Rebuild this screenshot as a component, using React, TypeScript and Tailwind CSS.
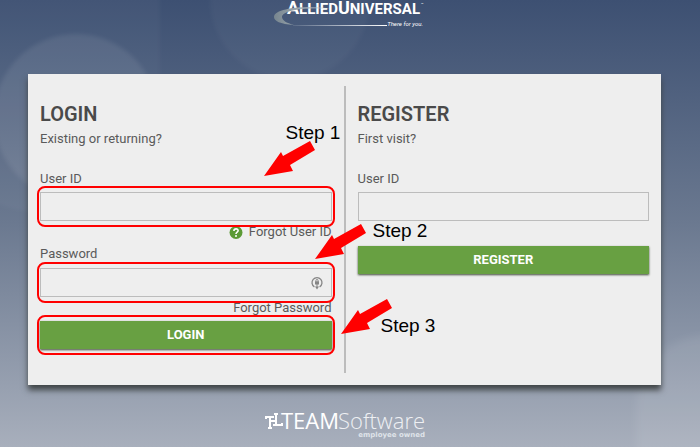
import React, { useState } from "react";

interface StepProps {
  label: string;
  className: string;
  labelClassName: string;
}

const inputClass =
  "block h-[29px] w-full border border-[#bcbcbc] bg-[#eeeeee] px-2 text-[13px] text-[#4a4a4a] outline-none";

const buttonClass =
  "block h-7 w-full cursor-pointer bg-[#68a042] text-[13px] font-bold text-white shadow-[0_1px_2px_#3f4a38]";

const AlliedLogo: React.FC = () => (
  <svg
    className="h-[30px] w-[154px] overflow-visible"
    viewBox="0 0 154 30"
    role="img"
    aria-label="Allied Universal"
  >
    <defs>
      <linearGradient id="swoosh" x1="0" x2="1">
        <stop offset="0" stopColor="#77858f" />
        <stop offset="0.4" stopColor="#9aa6ad" />
        <stop offset="1" stopColor="#c5ccd2" stopOpacity="0.2" />
      </linearGradient>
      <linearGradient id="rule" x1="0" x2="1">
        <stop offset="0" stopColor="#ffffff" stopOpacity="0.1" />
        <stop offset="1" stopColor="#ffffff" />
      </linearGradient>
    </defs>
    <text
      x="12"
      y="14"
      fontSize="15"
      fontWeight="700"
      fill="#fff"
      fontFamily="Roboto, sans-serif"
    >
      <tspan fontSize="18">A</tspan>LLIED<tspan fontSize="18">U</tspan>NIVERSAL
    </text>
    <text x="146" y="6" fontSize="4" fill="#fff" fontFamily="Roboto, sans-serif">
      ™
    </text>
    <path
      d="M56 9C40 5 -1 7 -1 17c0 4 6 7 20 8C11 23 7 20 7 17 7 10 30 7 56 9Z"
      fill="url(#swoosh)"
    />
    <rect x="18" y="25" width="94" height="1" fill="url(#rule)" />
    <text
      x="148"
      y="26"
      fontSize="6"
      fontStyle="italic"
      textAnchor="end"
      fill="#fff"
      fontFamily="Roboto, sans-serif"
    >
      There for you.
    </text>
  </svg>
);

const TeamLogo: React.FC = () => (
  <svg
    className="h-8 w-[164px] overflow-visible"
    viewBox="0 0 164 32"
    role="img"
    aria-label="TEAM Software, employee owned"
  >
    <path
      d="M3 10V8H11M7 8V20M5 19H9M8 12H12M13 4V16M11 5H15M10 16H19V14"
      stroke="#fff"
      strokeWidth="2"
      fill="none"
    />
    <text x="18" y="20" fontSize="22" fill="#fff" fontFamily="Open Sans, sans-serif">
      TEAM
    </text>
    <text
      x="75"
      y="20"
      fontSize="22"
      fontWeight="300"
      fill="#eef0f3"
      fontFamily="Open Sans, sans-serif"
    >
      Software
    </text>
    <text
      x="162"
      y="28"
      fontSize="7"
      fontWeight="700"
      textAnchor="end"
      fill="#dfe3e9"
      fontFamily="DejaVu Sans, sans-serif"
    >
      employee owned
    </text>
  </svg>
);

const Step: React.FC<StepProps> = ({ label, className, labelClassName }) => (
  <div className={`pointer-events-none absolute z-10 ${className}`}>
    <svg className="h-9 w-[52px]" viewBox="0 0 52 36" aria-hidden="true">
      <path d="M0 35L17 11L19 15L46 0L51 9L26 24L29 30Z" fill="#ff0000" />
    </svg>
    <span
      className={`absolute whitespace-nowrap font-['Liberation_Sans',sans-serif] text-[19px] leading-5 text-black ${labelClassName}`}
    >
      {label}
    </span>
  </div>
);

// Red frame drawn around the control that a step points at
const Highlight: React.FC<{ children: React.ReactNode }> = ({ children }) => (
  <div className="relative">
    {children}
    <div className="pointer-events-none absolute -inset-x-[3px] -inset-y-[6px] rounded-lg border-2 border-[#ff0000]" />
  </div>
);

// Large soft discs behind the card
const Backdrop: React.FC = () => (
  <div className="absolute inset-0 -z-10 overflow-hidden">
    <div className="absolute -top-32 -left-20 h-[340px] w-60 rounded-full bg-white/3 blur-[2px]" />
    <div className="absolute top-[34px] -left-[6px] h-[166px] w-[164px] rounded-full bg-white/8 blur-[2px]" />
    <div className="absolute -top-20 left-[210px] h-40 w-40 rounded-full bg-white/3 blur-[2px]" />
    <div className="absolute -right-20 -bottom-16 h-44 w-36 rounded-full bg-white/8 blur-[4px]" />
  </div>
);

const App: React.FC = () => {
  const [userId, setUserId] = useState("");
  const [password, setPassword] = useState("");
  const [newUserId, setNewUserId] = useState("");

  return (
    <div className="relative isolate min-h-screen overflow-hidden bg-linear-to-b from-[#3d5072] via-[#6b7990] to-[#a8afbc] font-[Roboto,sans-serif] text-[13px] leading-5 text-[#5a5a5a]">
      <Backdrop />

      <header className="flex justify-center pl-1">
        <AlliedLogo />
      </header>

      <main className="mt-11 mr-[39px] ml-7 grid grid-cols-[1fr_2px_1fr] gap-3 bg-[#eeeeee] p-3 shadow-[0_5px_6px_#3f4446]">
        <form className="pt-[14px] pb-6" onSubmit={(e) => e.preventDefault()}>
          <h1 className="text-xl leading-7 font-semibold text-[#4a4a4a]">LOGIN</h1>
          <p className="mt-px">Existing or returning?</p>

          <label htmlFor="userId" className="mt-5 mb-[3px] block">
            User ID
          </label>
          <Highlight>
            <input
              id="userId"
              type="text"
              value={userId}
              onChange={(e) => setUserId(e.target.value)}
              className={inputClass}
            />
            <Step label="Step 1" className="-top-[51px] right-4" labelClassName="-top-[18px] left-[22px]" />
          </Highlight>
          <div className="mt-px flex items-center justify-end gap-[6px]">
            <svg className="size-[14px]" viewBox="0 0 14 14" aria-hidden="true">
              <circle cx="7" cy="7.5" r="6.5" fill="#5b9a35" />
              <path
                d="M4.9 6C5 3.2 9.3 3.3 9.1 5.8C9 7.1 7 7.1 7 8.9"
                fill="none"
                stroke="#fff"
                strokeWidth="1.6"
              />
              <circle cx="7" cy="11" r="1" fill="#fff" />
            </svg>
            <a href="#forgot-user">Forgot User ID</a>
          </div>

          <label htmlFor="password" className="mt-[2px] mb-1 block">
            Password
          </label>
          <Highlight>
            <input
              id="password"
              type="password"
              value={password}
              onChange={(e) => setPassword(e.target.value)}
              className={inputClass}
            />
            <svg
              className="absolute top-2 right-2 size-[14px]"
              viewBox="0 0 14 14"
              fill="none"
              stroke="#858585"
              aria-hidden="true"
            >
              <path d="M4.4 10.9A5 5 0 1 1 9.6 10.9" strokeWidth="1.3" />
              <path d="M5.9 5.5V4.6a1.1 1.1 0 0 1 2.2 0v.9M7 8v4" strokeWidth="1" />
              <path d="M5 5.3h4v3.2H5ZM5 10.6h4L7 13.4Z" fill="#858585" stroke="none" />
            </svg>
            <Step label="Step 2" className="-top-[44px] -right-[35px]" labelClassName="-top-[3px] left-[58px]" />
          </Highlight>
          <div className="mt-px mb-[3px] flex justify-end">
            <a href="#forgot-password">Forgot Password</a>
          </div>

          <Highlight>
            <button type="submit" className={buttonClass}>
              LOGIN
            </button>
            <Step label="Step 3" className="-top-[22px] -right-[61px]" labelClassName="top-[17px] left-[40px]" />
          </Highlight>
        </form>

        <div className="bg-[#bcbcbc]" />

        <form className="pt-[14px]" onSubmit={(e) => e.preventDefault()}>
          <h2 className="text-xl leading-7 font-semibold text-[#4a4a4a]">REGISTER</h2>
          <p className="mt-px">First visit?</p>

          <label htmlFor="newUserId" className="mt-5 mb-[3px] block">
            User ID
          </label>
          <input
            id="newUserId"
            type="text"
            value={newUserId}
            onChange={(e) => setNewUserId(e.target.value)}
            className={inputClass}
          />
          <button type="submit" className={`mt-[25px] ${buttonClass}`}>
            REGISTER
          </button>
        </form>
      </main>

      <footer className="mt-6 flex justify-center pr-[11px]">
        <TeamLogo />
      </footer>
    </div>
  );
};

export default App;
